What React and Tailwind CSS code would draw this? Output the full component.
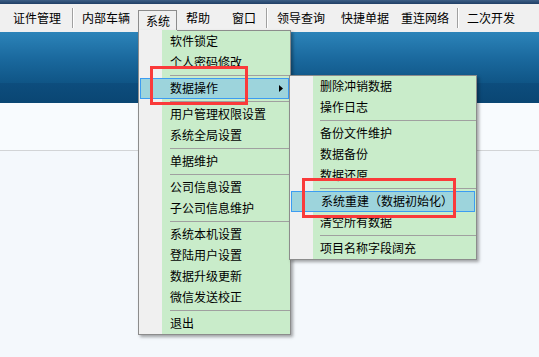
import { Fragment } from 'react'

const mainMenu = [
  '软件锁定',
  '个人密码修改',
  '-',
  { label: '数据操作', active: true, sub: true },
  '-',
  '用户管理权限设置',
  '系统全局设置',
  '-',
  '单据维护',
  '-',
  '公司信息设置',
  '子公司信息维护',
  '-',
  '系统本机设置',
  '登陆用户设置',
  '数据升级更新',
  '微信发送校正',
  '-',
  '退出',
]

const subMenu = [
  '删除冲销数据',
  '操作日志',
  '-',
  '备份文件维护',
  '数据备份',
  '数据还原',
  '-',
  { label: '系统重建（数据初始化）', active: true },
  '清空所有数据',
  '-',
  '项目名称字段阔充',
]

function MenuRows({ items, pad }) {
  return items.map((it, i) => {
    if (it === '-') {
      return (
        <div key={i} className={`h-[5px] flex items-center ${pad}`}>
          <div className="h-px w-full bg-[#a0a0a0]" />
        </div>
      )
    }
    const row = typeof it === 'string' ? { label: it } : it
    if (row.active) {
      return (
        <div
          key={i}
          className="h-[21px] mx-px flex items-center justify-between border border-[#3c9cf2] bg-[#9dd4dc] pl-[29px] pr-[5px]"
        >
          <span className="pb-[2px]">{row.label}</span>
          {row.sub && (
            <svg width="4" height="7" viewBox="0 0 4 7">
              <path d="M0 0 L4 3.5 L0 7 Z" fill="#000" />
            </svg>
          )}
        </div>
      )
    }
    return (
      <div key={i} className={`h-[21px] flex items-center ${pad}`}>
        <span className="pb-[2px]">{row.label}</span>
      </div>
    )
  })
}

function BarSep() {
  return (
    <div className="flex h-[20px]">
      <div className="w-px bg-[#a0a0a0]" />
      <div className="w-px bg-white" />
    </div>
  )
}

export default function App() {
  return (
    <div className="relative w-[539px] h-[357px] overflow-hidden bg-[#f4f8fc] text-[12px] text-black font-['Noto_Sans_CJK_SC','Noto_Sans',sans-serif] leading-none">
      {/* title strip */}
      <div className="h-[4px] bg-gradient-to-b from-[#3d5f86] to-[#203f66]" />

      {/* menubar */}
      <div className="h-[28px] bg-[#f0f0f0] flex items-center">
        <span className="ml-[13px]">证件管理</span>
        <div className="ml-[11px]"><BarSep /></div>
        <span className="ml-[8px]">内部车辆</span>
        <div className="ml-[8px] self-end h-[22px] w-[39px] border-l border-r border-t border-[#8c8c8c] flex items-center pl-[7px] pb-[1px]">
          系统
        </div>
        <span className="ml-[9px]">帮助</span>
        <span className="ml-[22px]">窗口</span>
        <div className="ml-[10px]"><BarSep /></div>
        <span className="ml-[9px]">领导查询</span>
        <span className="ml-[16px]">快捷单据</span>
        <span className="ml-[12px]">重连网络</span>
        <div className="ml-[8px]"><BarSep /></div>
        <span className="ml-[8px]">二次开发</span>
      </div>

      {/* blue band */}
      <div className="h-[51px] bg-gradient-to-b from-[#2c84b9] via-[#1b6a9f] to-[#0f5586]" />
      <div className="h-[20px] bg-gradient-to-b from-[#0d4d7d] to-[#0a4673]" />

      {/* content area */}
      <div className="h-[47px] bg-[#f8fbfe]" />
      <div className="h-px bg-[#d2d4d6]" />

      {/* dropdown: 系统 */}
      <div className="absolute left-[138px] top-[30px] w-[153px] border-l border-r border-b border-[#8c8c8c] bg-[linear-gradient(to_right,#f0f0f0_23px,#c9ecca_23px)] shadow-[2px_2px_3px_rgba(0,0,0,0.35)]">
        <div className="h-px ml-[38px] bg-[#8c8c8c]" />
        <MenuRows items={mainMenu} pad="pl-[31px]" />
      </div>

      {/* submenu: 数据操作 */}
      <div className="absolute left-[289px] top-[75px] w-[188px] border border-[#8c8c8c] bg-[linear-gradient(to_right,#f0f0f0_23px,#c9ecca_23px)] shadow-[2px_2px_3px_rgba(0,0,0,0.35)]">
        <MenuRows items={subMenu} pad="pl-[30px]" />
      </div>

      {/* red annotation boxes */}
      <div className="absolute left-[150px] top-[66px] w-[98px] h-[39px] border-[3px] border-[#fa3a3a]" />
      <div className="absolute left-[302px] top-[178px] w-[154px] h-[40px] border-[3px] border-[#fa3a3a]" />
    </div>
  )
}
